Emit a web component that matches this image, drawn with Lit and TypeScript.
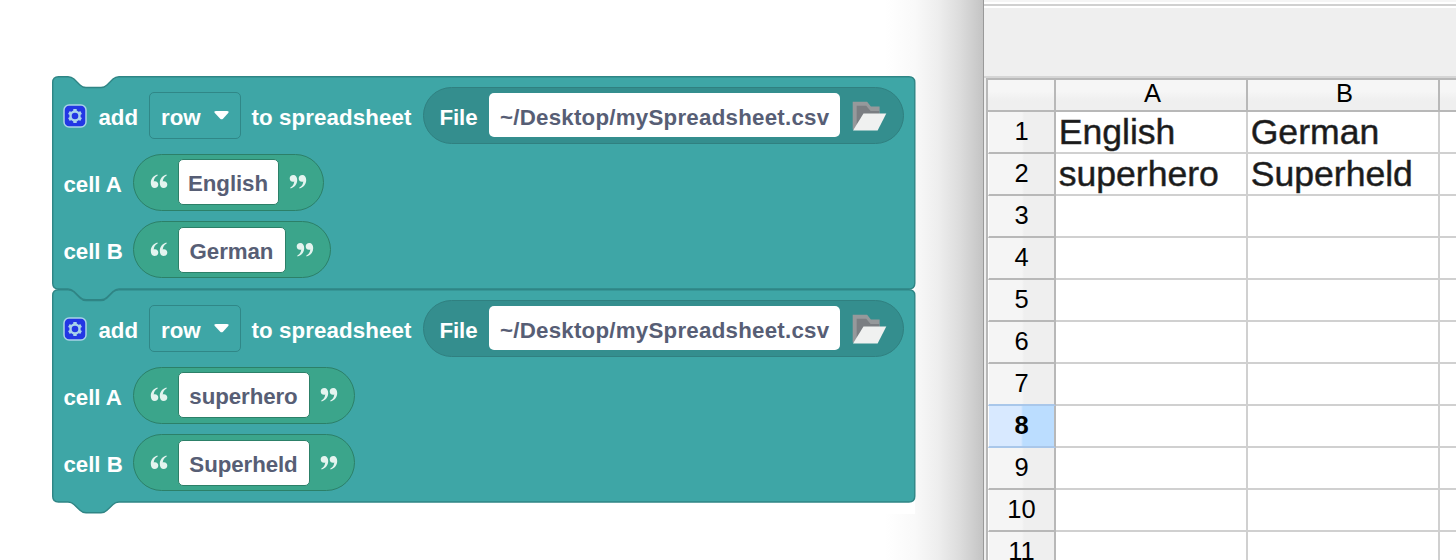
import { LitElement, html, svg, css } from "lit";
import { customElement, property } from "lit/decorators.js";

const TAB = "c3 0 4.500 1 6 2.400 l6 5.900 c1.500 1.500 3.500 2.500 6 2.500";
const TAB_UP = "c2.500 0 4.500 -1 6 -2.500 l6 -5.900 c1.500 -1.400 3 -2.400 6 -2.400";

@customElement("folder-icon")
class FolderIcon extends LitElement {
  static styles = css`:host { display: block; width: 35px; height: 32px; } svg { display: block; }`;
  render() {
    return html`<svg width="35" height="32" viewBox="0 0 35 32">
      <path d="M.7 30.500V2.700h14.400l3.800 4.800h8.700v9L20 29z" fill="#96999b"/>
      <path d="M4.700 26V6.700h9.500l4.400 5.300h8.700v8z" fill="#7b7e82"/>
      <path d="M11.500 14.500H34.300L25.600 31.500H1z" fill="#f0f1f0"/>
    </svg>`;
  }
}

@customElement("text-pill")
class TextPill extends LitElement {
  @property() value = "";
  @property({ type: Number }) fieldWidth = 100;
  static styles = css`
    :host { display: block; }
    .pill { box-sizing: border-box; height: 57px; display: flex; align-items: center; gap: 10px; padding: 0 16px 0 15.5px;
      border: 1.500px solid #2c8068; border-radius: 29px; background: #3ba58b; width: max-content; }
    .field { box-sizing: border-box; height: 46px; border: 1px solid #2c8068; border-radius: 5px; background: #fff;
      color: #575e75; display: flex; align-items: center; justify-content: center; padding-top: 4px; white-space: nowrap; letter-spacing: -.08px; }
    svg { display: block; margin-top: -1px; }
  `;
  render() {
    const mark = svg`<path d="M7.500 .5C3.500 1.500 .8 4.700 .8 9c0 3 1.500 5 3.800 5C6.900 14 8.300 12.600 8.300 10.500 8.300 8.500 6.900 7.200 5 7.200c-.6 0-1 .1-1.300.3C4 4.700 5.300 2.500 7.700 1.500z"/>
      <path d="M16.500 .5C12.500 1.500 9.800 4.700 9.800 9c0 3 1.500 5 3.800 5 2.300 0 3.700-1.400 3.700-3.500 0-2-1.400-3.300-3.300-3.300-.6 0-1 .1-1.300.3.400-2.800 1.700-5 4-6z"/>`;
    return html`<div class="pill">
      <svg width="18" height="15" fill="#e4f4ef">${mark}</svg>
      <div class="field" style="width:${this.fieldWidth}px">${this.value}</div>
      <svg width="18" height="15" fill="#e4f4ef"><g transform="rotate(180 9 7.500)">${mark}</g></svg>
    </div>`;
  }
}

@customElement("add-row-block")
class AddRowBlock extends LitElement {
  @property({ type: Array }) cells: [string, string, number][] = [];
  static styles = css`
    :host { display: block; width: 864px; height: 213px; color: #fff; font: bold 22.300px "Liberation Sans", Arial, sans-serif; }
    .block { display: grid; height: 213px; }
    .shape { grid-area: 1 / 1; overflow: visible; }
    .rows { grid-area: 1 / 1; display: flex; flex-direction: column; gap: 10.300px; padding-top: 11px; }
    .row { height: 57px; display: flex; align-items: center; white-space: nowrap; }
    .label { padding-top: 5px; }
    .gear { display: block; margin: 1px 0 0 11px; }
    .add { margin-left: 12px; width: 50px; letter-spacing: -.05px; }
    .drop { box-sizing: border-box; width: 92px; height: 47px; border: 1.500px solid #308787; border-radius: 5px;
      display: flex; align-items: center; gap: 12px; padding: 4px 0 0 11.500px; margin-top: 1px; }
    .drop svg { margin-top: -4px; }
    .to { margin-left: 11px; width: 171px; letter-spacing: .1px; }
    .file { box-sizing: border-box; width: 481px; height: 57px; border: 1.500px solid #308080; border-radius: 29px; background: #348e8e;
      display: flex; align-items: center; }
    .filelabel { margin-left: 16px; width: 49px; letter-spacing: -.1px; }
    .path { box-sizing: border-box; width: 351px; height: 44px; border-radius: 5px; background: #fff; color: #575e75;
      padding: 12px 0 0 11.500px; line-height: 25px; letter-spacing: .24px; }
    folder-icon { margin-left: 12px; margin-top: -1px; }
    .cell { margin-left: 12px; width: 69.500px; letter-spacing: -.05px; }
  `;
  render() {
    return html`<div class="block">
      <svg class="shape" width="864" height="213">
        <path fill="#3ea6a6" stroke="#2f8585" stroke-width="1.400"
          d="M.7 6.500 Q.7 .7 6.500 .7 H16 ${TAB} h15 ${TAB_UP} H857 Q862.800 .7 862.800 6.500 V207.300 Q862.800 213 857 213 H67
          c-3 0-4.500 1-6 2.400l-6 5.900c-1.500 1.500-3.500 2.500-6 2.500h-15c-2.500 0-4.500-1-6-2.500l-6-5.900c-1.500-1.400-3-2.400-6-2.400 H6.500 Q.7 213 .7 207.300Z"/>
      </svg>
      <div class="rows">
        <div class="row">
          <svg class="gear" width="24" height="24" viewBox="0 0 24 24">
            <rect x="1" y="1" width="22" height="22" rx="5" fill="#2337e4" stroke="#a9d3e8" stroke-width="1.500"/>
            <g fill="none" stroke="#a9d3ea">
              <circle cx="12" cy="12" r="4.500" stroke-width="2.400"/>
              <path stroke-width="3.400" d="M12 7.200V5M12 16.800V19M16.200 9.600l1.900-1.100M7.800 14.400l-1.900 1.100M16.200 14.400l1.900 1.100M7.800 9.600L5.900 8.500"/>
            </g>
          </svg>
          <span class="label add">add</span>
          <div class="drop"><span>row</span><svg width="18" height="11"><path d="M3 1H14Q16.500 1 15.200 3L10 8.700Q8.600 10 7.200 8.700L1.800 3Q.5 1 3 1Z" fill="#fff"/></svg></div>
          <span class="label to">to spreadsheet</span>
          <div class="file">
            <span class="label filelabel">File</span>
            <div class="path">~/Desktop/mySpreadsheet.csv</div>
            <folder-icon></folder-icon>
          </div>
        </div>
        ${this.cells.map(([name, value, width]) => html`<div class="row">
          <span class="label cell">${name}</span>
          <text-pill .value=${value} .fieldWidth=${width}></text-pill>
        </div>`)}
      </div>
    </div>`;
  }
}

@customElement("sheet-window")
class SheetWindow extends LitElement {
  static styles = css`
    :host { display: block; width: 473px; height: 560px; overflow: hidden; font-family: "Liberation Sans", Arial, sans-serif; color: #000; }
    .window { box-sizing: border-box; height: 560px; border-left: 1px solid #999; background: #efefef; display: flex; flex-direction: column; }
    .strip { box-sizing: border-box; height: 8px; flex: none; background: linear-gradient(#f5f5f5 2px, #fff 2px, #fff 4px, #d0d0d0 4px, #d0d0d0 6px, #fff 6px); }
    .bar { box-sizing: border-box; height: 70px; flex: none; border-bottom: 2px solid #d5d5d5; }
    .sheet { border-left: 2px solid #b8b8b8; border-top: 2px solid #b8b8b8; margin-left: 2px; width: 520px; background: #fff; }
    .line { display: grid; grid-template-columns: 68px 192px 192px 60px; height: 42px; }
    .line.top { height: 32px; background: linear-gradient(#f6f6f6 35%, #efefef 65%); font-size: 25.500px; }
    .line > div { box-sizing: border-box; border-right: 2px solid #d0d0d0; border-bottom: 2px solid #d0d0d0; white-space: nowrap; }
    .line.top > div { border-color: #b8b8b8; text-align: center; line-height: 26px; padding-left: 3px; }
    .line > .num { border-color: #b8b8b8; background: linear-gradient(90deg, #f5f5f5 33px, #efefef 35px); font-size: 25.500px;
      line-height: 39px; text-align: center; border-left: 1px solid #fff; }
    .line > .sel { background: linear-gradient(90deg, #d8e9ff 32px, #bbddff 34px); border-bottom-color: #a9c7ea; font-weight: bold; }
    .line > .before { border-bottom-color: #a9c7ea; }
    .line > .value { font-size: 35.600px; line-height: 40px; padding-left: 2.700px; color: #1a1a1a; -webkit-text-stroke: .5px #333; }
  `;
  render() {
    const data = [["English", "German"], ["superhero", "Superheld"]];
    return html`<div class="window">
      <div class="strip"></div><div class="bar"></div>
      <div class="sheet">
        <div class="line top"><div></div><div>A</div><div>B</div><div></div></div>
        ${Array.from({ length: 11 }, (_, i) => html`<div class="line">
          <div class="num ${i === 7 ? "sel" : i === 6 ? "before" : ""}">${i + 1}</div>
          <div class="value">${data[i]?.[0]}</div><div class="value">${data[i]?.[1]}</div><div></div>
        </div>`)}
      </div>
    </div>`;
  }
}

@customElement("app-root")
class AppRoot extends LitElement {
  static styles = css`
    :host { display: block; width: 1456px; height: 560px; overflow: hidden; }
    .page { display: flex; height: 560px; background: #fff; }
    .canvas { box-sizing: border-box; width: 983px; height: 560px; flex: none; padding: 75.500px 0 0 51.500px;
      background: linear-gradient(90deg, #fff 885px, #f9f9f9 915px, #eee 938px, #dcdcdc 960px, #c4c4c4 983px); }
    .stack { width: 863.500px; height: 438.500px; background: #fff; }
  `;
  render() {
    return html`<div class="page">
      <div class="canvas"><div class="stack">
        <add-row-block .cells=${[["cell A", "English", 101], ["cell B", "German", 108]]}></add-row-block>
        <add-row-block .cells=${[["cell A", "superhero", 132], ["cell B", "Superheld", 132]]}></add-row-block>
      </div></div>
      <sheet-window></sheet-window>
    </div>`;
  }
}
